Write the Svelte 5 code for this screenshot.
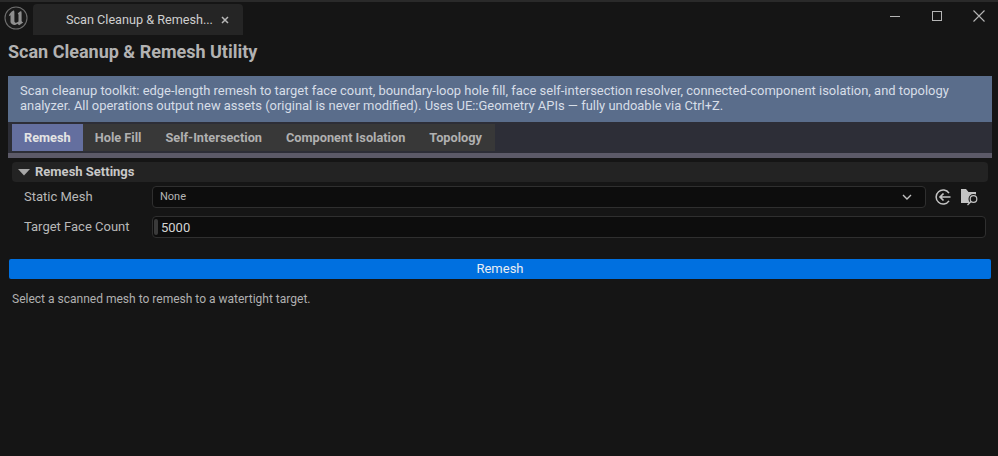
<script>
	const tabs = ['Remesh', 'Hole Fill', 'Self-Intersection', 'Component Isolation', 'Topology'];
	let active = 'Remesh';
	let faceCount = 5000;
</script>

<div class="window">
	<header class="titlebar">
		<svg class="logo" viewBox="0 0 24 24" width="24" height="24">
			<circle cx="12" cy="12" r="11" fill="#1a1a1a" stroke="#6e6e6e" stroke-width="1.100" />
			<path d="M9.500 4.500C7 5.800 5.200 7.800 4.800 10.300l1.700-1v7c1 2 2.800 3 4.500 2.700 1-.2 1.700-.6 2.200-1.200l2 1.400 4-2.800c-1-.2-1.500-.8-1.600-1.800V7c0-.8-.2-1.500-.5-2-1.200.5-2.500 1.400-3.400 2.500.6.400.8 1 .8 1.700v6.300l-1.700 1.100c-1.100.3-2.100-.2-2.400-1.200V6.300c0-.7-.2-1.300-.4-1.800z" fill="#8f8f8f" />
		</svg>
		<div class="doc-tab">
			<span>Scan Cleanup &amp; Remesh...</span>
			<svg viewBox="0 0 8 8" width="8" height="8">
				<path d="M1 1l6 6M7 1L1 7" stroke="#b8b8b8" stroke-width="1.500" />
			</svg>
		</div>
		<div class="win-btns">
			<svg viewBox="0 0 12 12" width="12" height="12"><path d="M1 6.500h10" stroke="#b5b5b5" /></svg>
			<svg viewBox="0 0 12 12" width="12" height="12"><rect x="1.500" y="1.500" width="9" height="9" fill="none" stroke="#b5b5b5" /></svg>
			<svg viewBox="0 0 12 12" width="12" height="12"><path d="M.5.500l11 11M11.500.500l-11 11" stroke="#b5b5b5" stroke-width="1.100" /></svg>
		</div>
	</header>

	<h1>Scan Cleanup &amp; Remesh Utility</h1>

	<p class="info">
		Scan cleanup toolkit: edge-length remesh to target face count, boundary-loop hole fill, face self-intersection resolver, connected-component isolation, and topology analyzer. All operations output new assets (original is never modified). Uses UE::Geometry APIs — fully undoable via Ctrl+Z.
	</p>

	<div class="tabbar">
		<div class="tabs">
			{#each tabs as tab}
				<button class="tab" class:active={tab === active} onclick={() => (active = tab)}>{tab}</button>
			{/each}
		</div>
	</div>
	<div class="tabline"></div>

	<section class="settings">
		<div class="section-head">
			<svg viewBox="0 0 12 8" width="12" height="8"><path d="M0 1h12L6 7.500z" fill="#a8a8a8" /></svg>
			<span>Remesh Settings</span>
		</div>

		<div class="row first">
			<span class="label">Static Mesh</span>
			<div class="combo">
				<span>None</span>
				<svg viewBox="0 0 10 6" width="10" height="6"><path d="M1 1l4 4 4-4" fill="none" stroke="#c0c0c0" stroke-width="1.400" /></svg>
			</div>
			<svg class="tool" viewBox="0 0 16 16" width="16" height="16">
				<path d="M14 4.200A7 7 0 1 0 14 11.800" fill="none" stroke="#c4c4c4" stroke-width="1.500" />
				<path d="M15.500 8H5M8.500 4.500L5 8l3.500 3.500" fill="none" stroke="#c4c4c4" stroke-width="1.700" />
			</svg>
			<svg class="tool folder" viewBox="0 0 17 17" width="17" height="17">
				<path d="M0 0h5l2.500 3H15v4H0zM0 6h11v8H0z" fill="#c4c4c4" />
				<circle cx="12.500" cy="10" r="5" fill="#151515" />
				<circle cx="12.500" cy="10" r="3.300" fill="none" stroke="#c4c4c4" stroke-width="1.200" />
				<path d="M10 12.500L6.500 16" stroke="#c4c4c4" stroke-width="1.300" />
			</svg>
		</div>

		<div class="row">
			<span class="label">Target Face Count</span>
			<div class="num">
				<i></i>
				<span>{faceCount}</span>
			</div>
		</div>
	</section>

	<button class="primary">Remesh</button>

	<p class="status">Select a scanned mesh to remesh to a watertight target.</p>
</div>

<style>
	:global(body) {
		background: #151515;
	}

	.window {
		height: 456px;
		box-sizing: border-box;
		border-top: 2px solid #2a2a2a;
		background: #151515;
		font-family: Roboto, "Liberation Sans", sans-serif;
		overflow: hidden;
		display: flex;
		flex-direction: column;
	}

	.titlebar {
		height: 33px;
		display: flex;
		align-items: flex-start;
		padding-top: 2px;
		box-sizing: border-box;
	}

	.logo {
		margin: 2px 5px 0 4px;
	}

	.doc-tab {
		width: 210px;
		height: 31px;
		box-sizing: border-box;
		background: #252525;
		border-radius: 4px 4px 0 0;
		display: flex;
		align-items: center;
		padding-left: 33px;
		gap: 8px;
		color: #cfcfcf;
		font-size: 12.650px;
	}

	.win-btns {
		margin-left: auto;
		display: flex;
		gap: 30px;
		padding: 6px 13px 0 0;
	}

	h1 {
		margin: 6px 0 0 8px;
		font-size: 18px;
		line-height: 22px;
		font-weight: 700;
		color: #b2b2b2;
	}

	.info {
		margin: 13px 6px 0 8px;
		height: 46px;
		box-sizing: border-box;
		padding: 7px 12px;
		background: #5a6d8b;
		color: #d7dee8;
		font-size: 12.940px;
		line-height: 15px;
	}

	.tabbar {
		margin: 0 6px 0 8px;
		height: 31px;
		box-sizing: border-box;
		padding: 2px 4px;
		background: #2d2e37;
	}

	.tabs {
		display: flex;
		width: 483px;
		height: 27px;
		background: #383838;
	}

	.tab {
		flex: none;
		white-space: nowrap;
		border: 0;
		margin: 0;
		padding: 0 12px;
		background: none;
		color: #b0b0b0;
		font: 700 12.760px Roboto, "Liberation Sans", sans-serif;
	}

	.tab.active {
		background: #646f9f;
		color: #e4e4e4;
	}

	.tabline {
		margin: 0 6px 0 8px;
		height: 5px;
		background: #5c5a68;
	}

	.settings {
		margin: 4px 10px 0 12px;
	}

	.section-head {
		height: 20px;
		background: #232323;
		border-radius: 4px;
		display: flex;
		align-items: center;
		gap: 5px;
		padding-left: 6px;
		padding-bottom: 1px;
		box-sizing: border-box;
		color: #c8c8c8;
		font-size: 13px;
		font-weight: 700;
	}

	.row {
		display: flex;
		align-items: center;
		margin-top: 8px;
		height: 22px;
	}

	.row.first {
		margin-top: 4px;
	}

	.label {
		width: 140px;
		flex: none;
		box-sizing: border-box;
		padding: 0 0 1px 12px;
		color: #b8b8b8;
		font-size: 13px;
	}

	.combo,
	.num {
		height: 22px;
		box-sizing: border-box;
		background: #0d0d0d;
		border: 1px solid #2f2f2f;
		border-radius: 4px;
		display: flex;
		align-items: center;
	}

	.combo {
		width: 774px;
		padding: 0 13px 1px 7px;
		justify-content: space-between;
		color: #b4b4b4;
		font-size: 11px;
	}

	.tool {
		margin-left: 9px;
		flex: none;
	}

	.tool.folder {
		margin-left: 10px;
	}

	.num {
		width: 834px;
		color: #d4d4d4;
		font-size: 13px;
	}

	.num i {
		width: 4px;
		height: 16px;
		margin: 0 3px 0 1px;
		border-radius: 2px;
		background: #3a3a3a;
	}

	.primary {
		display: block;
		margin: 21px 7px 0 9px;
		height: 20px;
		padding: 0 0 1px;
		border: 0;
		border-radius: 2px;
		background: #0070e0;
		color: #e8edf3;
		font: 400 13px Roboto, "Liberation Sans", sans-serif;
	}

	.status {
		margin: 12px 0 0 12px;
		color: #b0b0b0;
		font-size: 12.030px;
		line-height: 16px;
	}
</style>
